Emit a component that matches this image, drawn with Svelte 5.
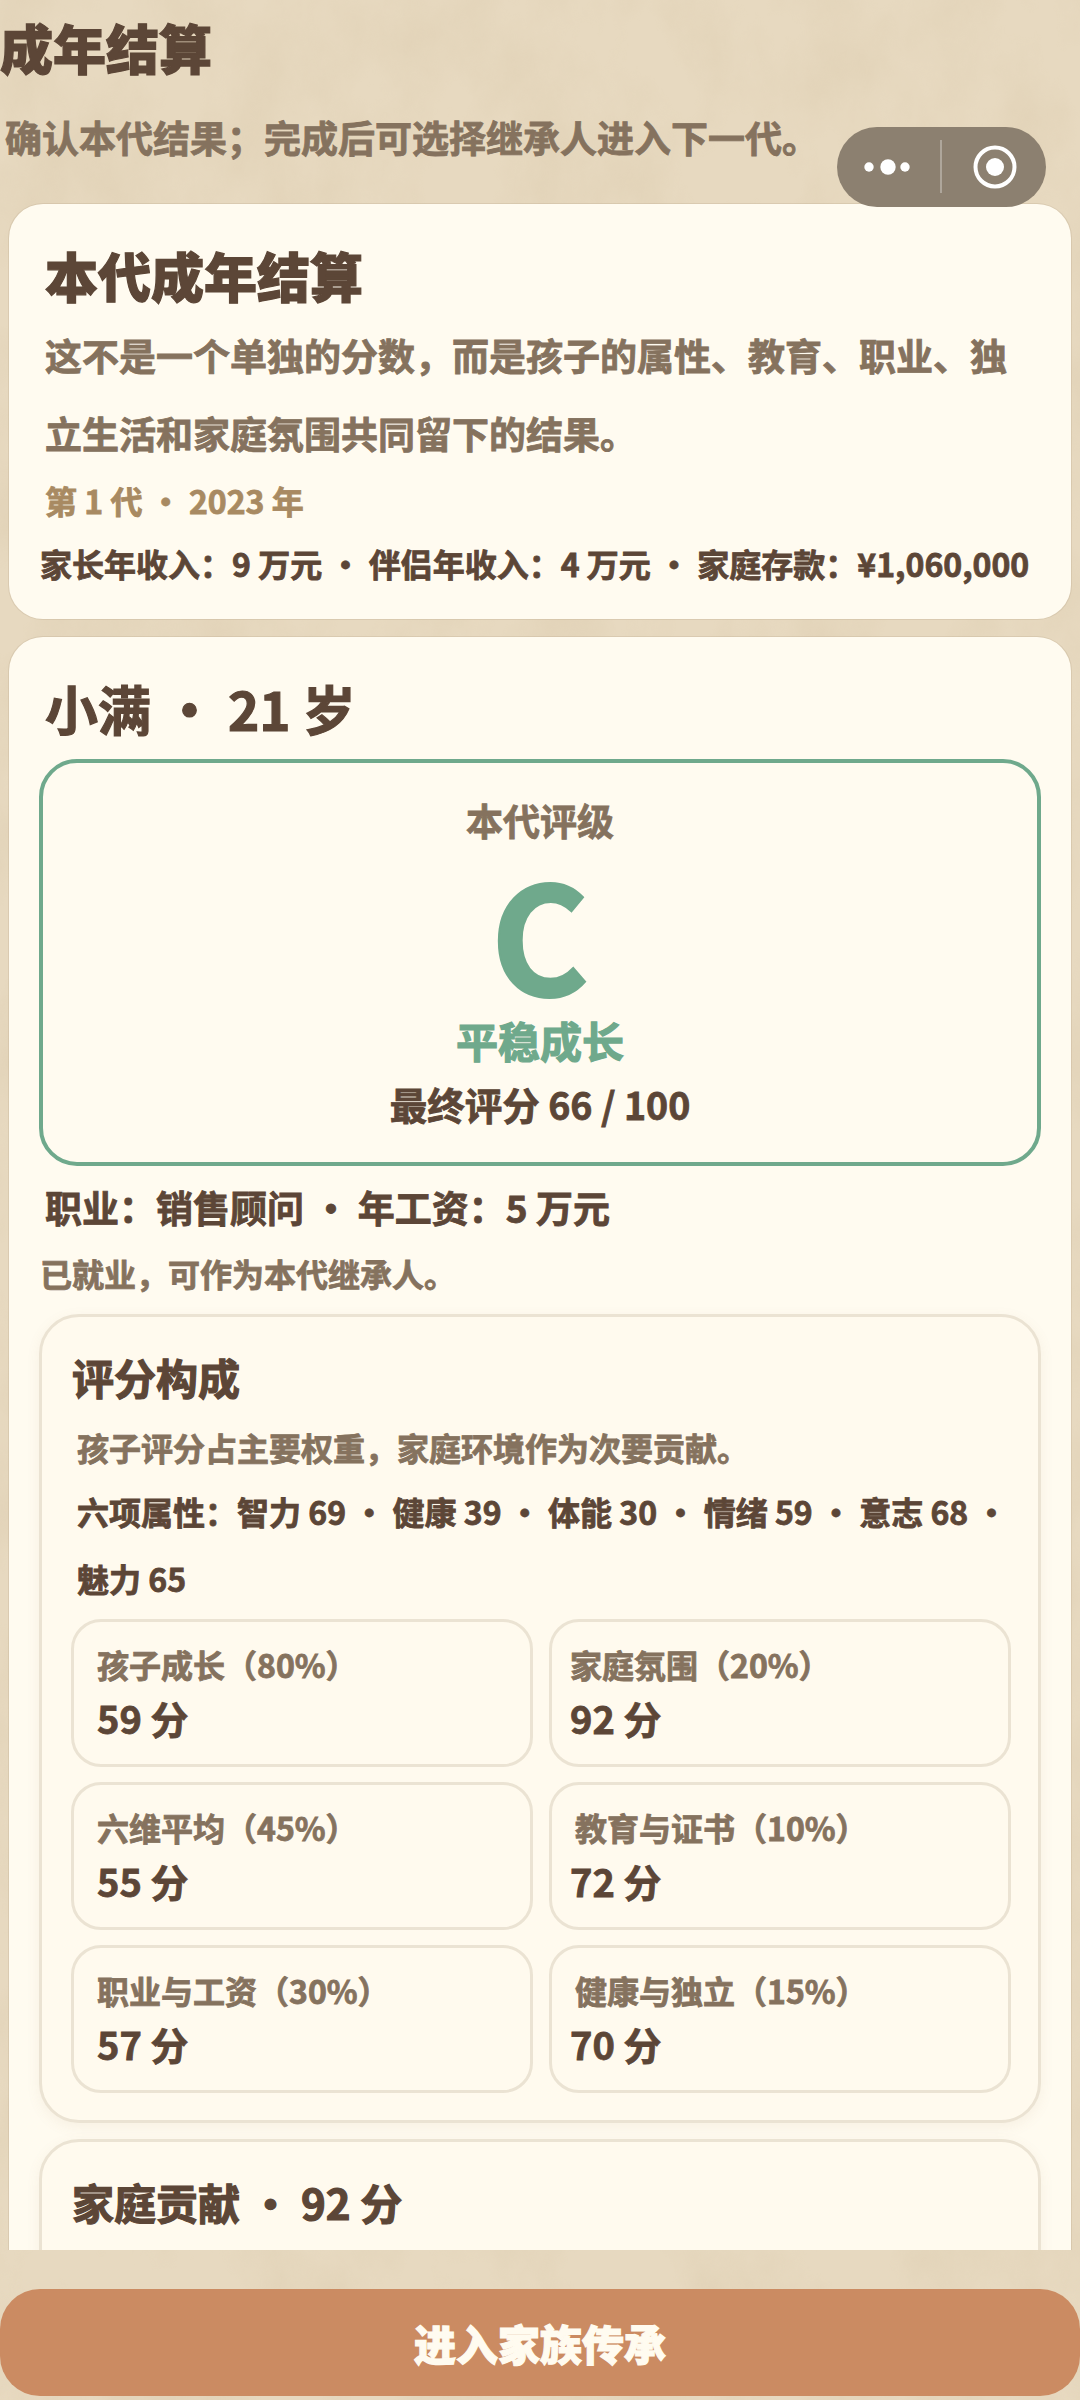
<script lang="ts">
    const breakdown = [
        { label: '孩子成长（80%）', value: '59 分' },
        { label: '家庭氛围（20%）', value: '92 分' },
        { label: '六维平均（45%）', value: '55 分' },
        { label: '教育与证书（10%）', value: '72 分', nudge: true },
        { label: '职业与工资（30%）', value: '57 分' },
        { label: '健康与独立（15%）', value: '70 分', nudge: true }
    ];
</script>

<div class="page">
    <!-- paper texture behind everything -->
    <svg class="paper" width="1080" height="2400" aria-hidden="true">
        <filter id="grain" x="0" y="0" width="100%" height="100%">
            <feTurbulence type="fractalNoise" baseFrequency="0.014 0.009" numOctaves="5" seed="11" />
            <feColorMatrix values="0 0 0 0 0.62  0 0 0 0 0.5  0 0 0 0 0.32  1.1 0 0 0 -0.42" />
        </filter>
        <rect width="1080" height="2400" fill="#e7d9c0" />
        <rect width="1080" height="2400" filter="url(#grain)" opacity="0.35" />
    </svg>

    <div class="scroll">
        <header class="head">
            <h1>成年结算</h1>
            <p>确认本代结果；完成后可选择继承人进入下一代。</p>
        </header>

        <section class="card intro">
            <h2>本代成年结算</h2>
            <p class="desc">这不是一个单独的分数，而是孩子的属性、教育、职业、独立生活和家庭氛围共同留下的结果。</p>
            <p class="gen">第 1 代 · 2023 年</p>
            <p class="income">家长年收入：9 万元 · 伴侣年收入：4 万元 · 家庭存款：¥1,060,000</p>
        </section>

        <section class="card main">
            <h2 class="name">小满 · 21 岁</h2>

            <div class="grade">
                <div class="grade-label">本代评级</div>
                <div class="grade-letter">C</div>
                <div class="grade-title">平稳成长</div>
                <div class="grade-score">最终评分 66 / 100</div>
            </div>

            <p class="job">职业：销售顾问 · 年工资：5 万元</p>
            <p class="job-note">已就业，可作为本代继承人。</p>

            <div class="panel">
                <h3>评分构成</h3>
                <p class="panel-note">孩子评分占主要权重，家庭环境作为次要贡献。</p>
                <p class="attrs">六项属性：智力 69 · 健康 39 · 体能 30 · 情绪 59 · 意志 68 · 魅力 65</p>
                <div class="grid">
                    {#each breakdown as item}
                        <div class="cell">
                            <div class="cell-label" class:nudge={item.nudge}>{item.label}</div>
                            <div class="cell-value">{item.value}</div>
                        </div>
                    {/each}
                </div>
            </div>

            <div class="panel family">
                <h3>家庭贡献 · 92 分</h3>
            </div>
        </section>
    </div>

    <div class="footer">
        <button class="cta">进入家族传承</button>
    </div>

    <!-- mini program capsule floats over the page -->
    <div class="capsule">
        <svg width="209" height="80" viewBox="0 0 209 80" aria-hidden="true">
            <circle cx="32" cy="40" r="4.7" fill="#fff" />
            <circle cx="51" cy="40" r="7.7" fill="#fff" />
            <circle cx="68" cy="40" r="4.7" fill="#fff" />
            <rect x="103" y="13" width="2" height="53" fill="#fff" opacity="0.3" />
            <circle cx="158" cy="40" r="19.5" fill="none" stroke="#fff" stroke-width="4" />
            <circle cx="158" cy="40" r="9" fill="#fff" />
        </svg>
    </div>
</div>

<style>
    :global(body) {
        margin: 0;
        background: #e6d7bd;
    }

    .page {
        position: relative;
        width: 1080px;
        height: 2400px;
        overflow: hidden;
        font-family: "Noto Sans CJK SC", "Noto Sans", sans-serif;
        font-weight: 700;
        color: #5c4637;
        -webkit-text-stroke: 0.8px;
    }

    .paper {
        position: absolute;
        top: 0;
        left: 0;
    }

    .scroll {
        position: relative;
        height: 2250px;
        overflow: hidden;
    }

    h1, h2, h3, p {
        margin: 0;
    }

    .head {
        height: 204px;
    }

    .head h1 {
        font-size: 53px;
        line-height: 76px;
        padding-top: 9px;
        font-weight: 900;
        -webkit-text-stroke: 1.2px;
    }

    .head p {
        font-size: 37px;
        line-height: 52px;
        padding: 26px 0 0 5px;
        color: #85725e;
    }

    .card {
        margin: 0 9px;
        background: #fffbf0;
        border-radius: 34px;
        box-shadow: 0 0 0 1px rgba(180, 160, 130, 0.25);
    }

    .intro {
        height: 415px;
        padding: 33px 36px 0;
        box-sizing: border-box;
        margin-bottom: 18px;
    }

    .intro h2 {
        font-size: 53px;
        line-height: 76px;
        font-weight: 900;
        -webkit-text-stroke: 1.2px;
    }

    .desc {
        font-size: 37px;
        line-height: 78px;
        margin-top: 3px;
        color: #85725e;
    }

    .gen {
        font-size: 32px;
        line-height: 48px;
        margin-top: 4px;
        color: #a88a62;
    }

    .income {
        font-size: 32px;
        line-height: 50px;
        margin: 14px -10px 0 -5px;
        white-space: nowrap;
    }

    .main {
        padding: 33px 30px 0;
    }

    .name {
        font-size: 53px;
        line-height: 76px;
        margin-left: 6px;
        -webkit-text-stroke: 1.2px;
    }

    .grade {
        margin-top: 13px;
        height: 407px;
        box-sizing: border-box;
        border: 4px solid #6fa98c;
        border-radius: 38px;
        text-align: center;
        padding-top: 31px;
    }

    .grade-label {
        font-size: 37px;
        line-height: 52px;
        color: #85725e;
    }

    .grade-letter {
        font-size: 150px;
        line-height: 130px;
        margin-top: 20px;
        color: #6fa98c;
        -webkit-text-stroke: 2px;
    }

    .grade-title {
        font-size: 42px;
        line-height: 62px;
        margin-top: 13px;
        color: #6fa98c;
        -webkit-text-stroke: 1.2px;
    }

    .grade-score {
        font-size: 37.5px;
        line-height: 56px;
        margin-top: 5px;
    }

    .job {
        font-size: 37px;
        line-height: 56px;
        margin: 13px 0 0 6px;
    }

    .job-note {
        font-size: 32px;
        line-height: 46px;
        margin: 15px 0 0 1px;
        color: #85725e;
    }

    .panel {
        margin-top: 18px;
        box-sizing: border-box;
        border: 3px solid #ebe3d3;
        border-radius: 40px;
        padding: 30px 28px 27px;
        background: #fffaee;
        box-shadow: 0 4px 14px rgba(150, 120, 80, 0.08);
    }

    .panel h3 {
        font-size: 42px;
        line-height: 60px;
        margin-left: 2px;
        -webkit-text-stroke: 1.2px;
    }

    .panel-note {
        font-size: 32px;
        line-height: 46px;
        margin: 17px 0 0 7px;
        color: #85725e;
    }

    .attrs {
        font-size: 32px;
        line-height: 67px;
        margin: 8px 0 0 7px;
    }

    .grid {
        display: grid;
        grid-template-columns: 1fr 1fr;
        gap: 15px 16px;
        margin: 7px -1px 0 1px;
    }

    .cell {
        height: 148px;
        box-sizing: border-box;
        border: 3px solid #ebe3d3;
        border-radius: 30px;
        padding: 19px 23px;
    }

    .cell:nth-child(even) {
        padding-left: 18px;
    }

    .cell-label {
        font-size: 32px;
        line-height: 46px;
        color: #85725e;
    }

    .cell-label.nudge {
        margin-left: 5px;
    }

    .cell-value {
        font-size: 38px;
        line-height: 56px;
        margin-top: 3px;
    }

    .family {
        margin-top: 16px;
        height: 300px;
    }

    .footer {
        position: relative;
        padding-top: 39px;
    }

    .cta {
        display: block;
        width: 100%;
        height: 107px;
        border: none;
        border-radius: 40px;
        background: #cb8b62;
        color: #fffbf0;
        font-family: inherit;
        font-size: 42px;
        font-weight: 900;
        -webkit-text-stroke: 1.2px;
    }

    .capsule {
        position: absolute;
        top: 127px;
        left: 837px;
        width: 209px;
        height: 80px;
        border-radius: 40px;
        background: #8c8070;
    }

    .capsule svg {
        display: block;
    }
</style>
